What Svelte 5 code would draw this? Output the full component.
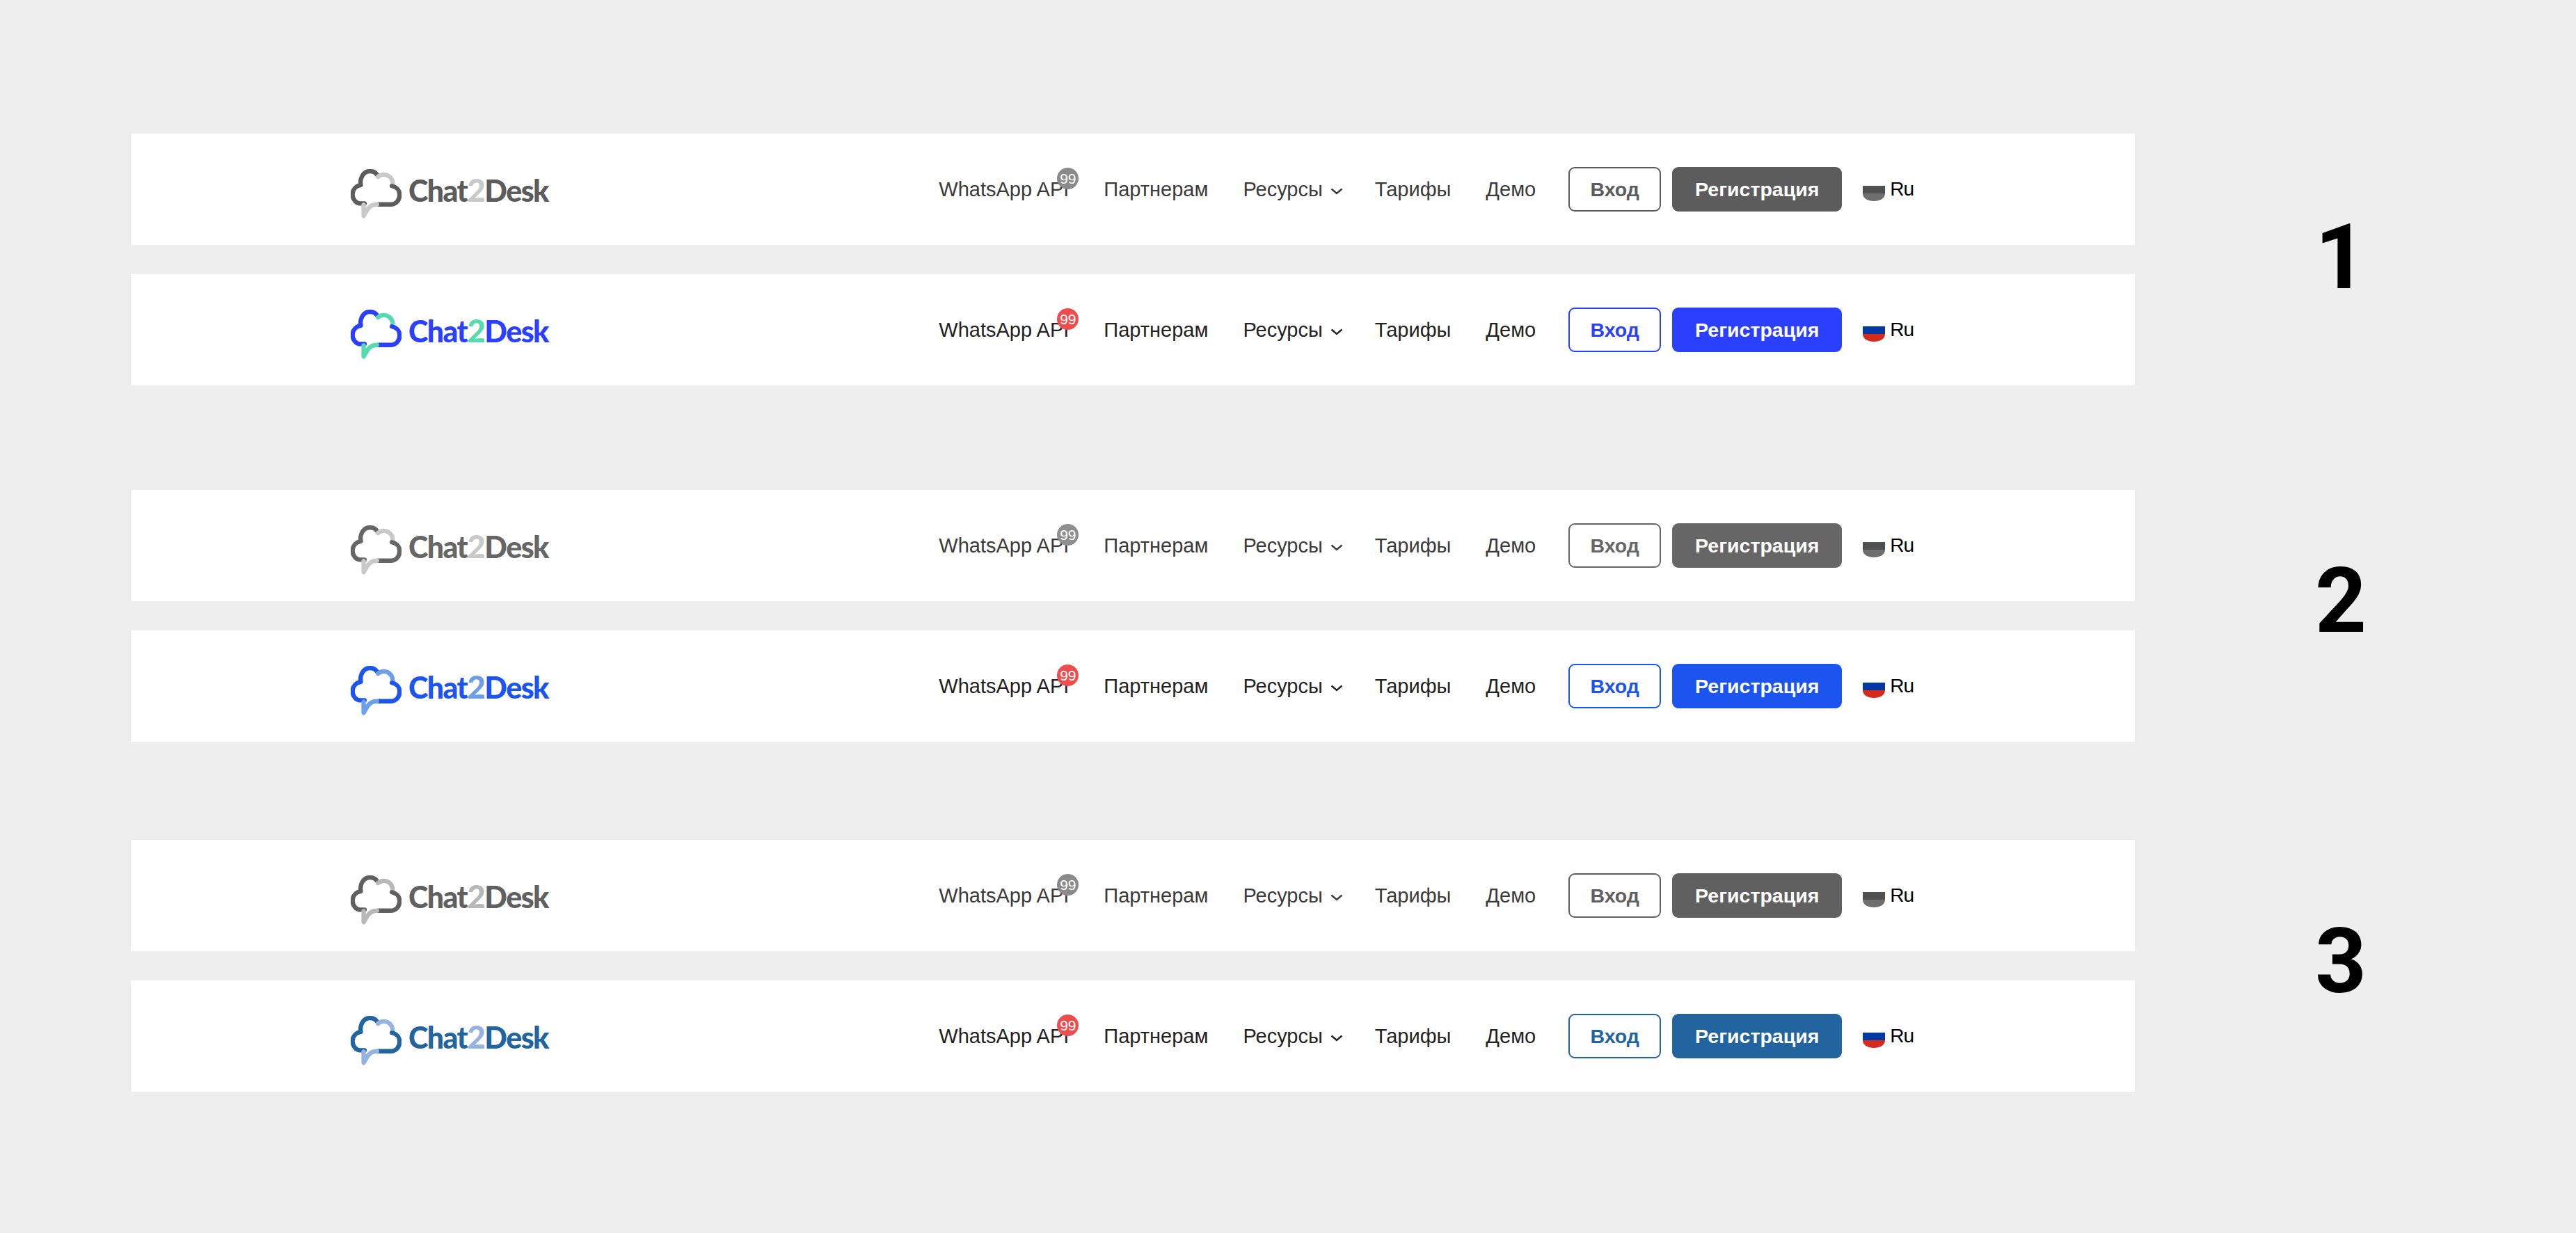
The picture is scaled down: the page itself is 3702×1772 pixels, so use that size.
<script>
  const groups = [
    { n: 1, cls: 'label-1', gray: 'gray-a', color: 'blue-a' },
    { n: 2, cls: 'label-2', gray: 'gray-b', color: 'blue-b' },
    { n: 3, cls: 'label-3', gray: 'gray-c', color: 'blue-c' }
  ];
</script>

{#snippet bar(theme)}
  <header class="bar {theme}">
    <a class="logo" href="#top">
      <svg class="cloud" viewBox="72 78 220 212" aria-hidden="true">
        <path class="main" d="M132 226 H116 C94 226 80 208 80 186 C80 166 94 150 116 146 C110 115 128 86 155 86 C170 86 182 94 188 104" />
        <path class="accent" d="M190 110 C205 98 225 98 238 108 C250 117 255 132 254 146" />
        <path class="main" d="M250 150 C270 154 284 168 284 188 C284 212 268 230 244 230 H192" />
        <path class="accent" d="M186 230 C170 230 156 236 146 250 L128 280 V232" />
      </svg>
      <span class="word">Chat<b>2</b>Desk</span>
    </a>
    <nav class="nav">
      <a class="link api" href="#top">WhatsApp API<span class="badge">99</span></a>
      <a class="link" href="#top">Партнерам</a>
      <a class="link res" href="#top">Ресурсы
        <svg class="chev" viewBox="0 0 18 10" aria-hidden="true"><path d="M1.5 1.5 L9 8 L16.5 1.5" /></svg>
      </a>
      <a class="link" href="#top">Тарифы</a>
      <a class="link" href="#top">Демо</a>
    </nav>
    <div class="actions">
      <button class="btn login">Вход</button>
      <button class="btn signup">Регистрация</button>
      <span class="lang">
        <svg class="flag" viewBox="0 0 32 22" aria-hidden="true">
          <rect class="f1" width="32" height="11" />
          <path class="f2" d="M0 11 H32 C32 18 25 22 16 22 C7 22 0 18 0 11Z" />
        </svg>
        Ru
      </span>
    </div>
  </header>
{/snippet}

<main class="page">
  {#each groups as g}
    <section class="group">
      <div class="bars">
        {@render bar(g.gray)}
        {@render bar(g.color)}
      </div>
      <div class="label {g.cls}">{g.n}</div>
    </section>
  {/each}
</main>

<style>
  :global(body) { margin: 0; background: #eeeeee; }
  .page {
    width: 3702px;
    height: 1772px;
    box-sizing: border-box;
    padding: 192px 0 0 188px;
    background: #eeeeee;
    font-family: "Liberation Sans", Arial, sans-serif;
    overflow: hidden;
  }
  .group { display: flex; }
  .group + .group { margin-top: 150px; }
  .group:last-child { margin-top: 141px; }
  .bars { display: flex; flex-direction: column; gap: 42px; width: 2880px; flex: none; }
  .label {
    width: 592px;
    text-align: center;
    font: 700 129px/1 Roboto, Inter, sans-serif;
    color: #000;
  }
  .label-1 { padding-top: 113px; }
  .label-2 { padding-top: 95px; }
  .label-3 { padding-top: 110px; }

  .bar {
    height: 160px;
    background: #fff;
    display: flex;
    align-items: center;
    padding: 0 318px 0 316px;
    color: #1a1a1a;
  }
  .gray-a { --main: #5c5c5c; --accent: #c9c9c9; --badge: #8a8a8a; --ink: #3a3a3a; --f1: #505050; --f2: #6e6e6e; }
  .gray-b { --main: #666666; --accent: #c9c9c9; --badge: #8f8f8f; --ink: #3a3a3a; --f1: #505050; --f2: #6e6e6e; }
  .gray-c { --main: #606060; --accent: #b8b8b8; --badge: #8a8a8a; --ink: #3a3a3a; --f1: #505050; --f2: #6e6e6e; }
  .blue-a { --main: #2b3fff; --accent: #55dbae; --badge: #ee4d4d; --ink: #222; --f1: #0039a6; --f2: #d52b1e; }
  .blue-b { --main: #1b54ee; --accent: #6c9fe8; --badge: #ee4d4d; --ink: #222; --f1: #0039a6; --f2: #d52b1e; }
  .blue-c { --main: #21649e; --accent: #94b3e0; --badge: #ee4d4d; --ink: #222; --f1: #0039a6; --f2: #d52b1e; }

  .logo {
    display: flex;
    align-items: center;
    gap: 10px;
    padding-top: 13px;
    text-decoration: none;
  }
  .cloud { width: 73px; height: 71px; fill: none; stroke-width: 19; stroke-linecap: round; stroke-linejoin: round; }
  .main { stroke: var(--main); }
  .accent { stroke: var(--accent); }
  .word {
    font: 900 43px/1 Lato, sans-serif;
    color: var(--main);
    letter-spacing: -1.6px;
    margin-top: -11px;
  }
  .word b { color: var(--accent); font-weight: 900; font-size: 46px; }

  .nav { display: flex; align-items: center; gap: 50px; margin-left: auto; }
  .link {
    position: relative;
    font-size: 29px;
    line-height: 36px;
    color: var(--ink);
    text-decoration: none;
    white-space: nowrap;
  }
  .res { display: flex; align-items: center; gap: 11px; margin-right: -4px; }
  .chev { width: 18px; height: 10px; margin-top: 6px; fill: none; stroke: var(--ink); stroke-width: 2.4; }
  .badge {
    position: absolute;
    top: -13px;
    right: -14px;
    width: 31px;
    height: 31px;
    border-radius: 50%;
    background: var(--badge);
    color: #fff;
    font-size: 21px;
    line-height: 31px;
    text-align: center;
  }
  .actions { display: flex; align-items: center; margin-left: 47px; }
  .btn {
    height: 64px;
    box-sizing: border-box;
    border-radius: 9px;
    border: 2px solid var(--main);
    font: 700 28.5px/1 "Liberation Sans", Arial, sans-serif;
    padding: 0;
  }
  .login { width: 133px; background: #fff; color: var(--main); }
  .signup { width: 244px; margin-left: 16px; background: var(--main); color: #fff; }
  .lang {
    display: flex;
    align-items: center;
    gap: 7px;
    margin-left: 30px;
    font-size: 28px;
    letter-spacing: -1px;
    line-height: 36px;
    color: #000;
  }
  .flag { width: 32px; height: 22px; margin-top: 11px; }
  .f1 { fill: var(--f1); }
  .f2 { fill: var(--f2); }
</style>
